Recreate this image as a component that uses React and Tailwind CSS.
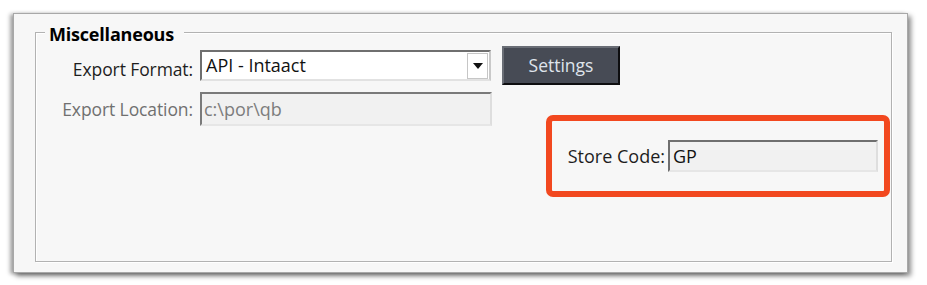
import React from 'react';

const font = { fontFamily: '"Open Sans", "Noto Sans", sans-serif' };

const App = () => {
  return (
    <div className="min-h-screen bg-white pt-[13px] pl-[13px]" style={font}>
      {/* Window panel */}
      <div className="w-[895px] h-[260px] bg-[#f7f7f7] border border-[#a8a8a8] shadow-[3px_3px_5px_rgba(0,0,0,0.45),-3px_1px_4px_rgba(0,0,0,0.35)] pt-[18px] pl-[21px]">
        {/* Miscellaneous group box */}
        <div className="relative w-[857px] h-[230px] border border-[#b2b2b2] shadow-[inset_1px_1px_0_#ffffff,1px_1px_0_#ffffff]">
          <span className="absolute left-[9px] -top-[10px] bg-[#f7f7f7] pl-[4px] pr-[10px] text-[18px] leading-[22px] font-bold tracking-[-0.2px] text-black">
            Miscellaneous
          </span>

          {/* Export Format */}
          <div className="flex items-center mt-[13px] h-[39px]">
            <label className="w-[157px] pt-[7px] text-right text-[17.5px] text-[#1e1e1e] tracking-[-0.1px] whitespace-nowrap">Export Format:</label>
            <div className="ml-[7px] w-[291px] h-[31px] flex items-center bg-white border-2 border-t-[#6f6f6f] border-l-[#6f6f6f] border-r-[#c9c9c9] border-b-[#e2e2e2]">
              <span className="flex-1 pl-[4px] text-[18px] text-[#111]">API - Intaact</span>
              <div className="w-[21px] h-[26px] mr-[1px] flex items-center justify-center bg-white border border-[#c6c6c6]">
                <svg width="10" height="6" viewBox="0 0 10 6">
                  <path d="M0 0 H10 L5 6 Z" fill="#111" />
                </svg>
              </div>
            </div>
            <button className="ml-[11px] w-[118px] h-[39px] bg-[#474b55] border-2 border-t-[#6a6e76] border-l-[#6a6e76] border-r-[#0e0e10] border-b-[#0e0e10] text-[#dfe4ec] text-[17.5px]">
              Settings
            </button>
          </div>

          {/* Export Location */}
          <div className="flex items-center mt-[7px] h-[34px]">
            <label className="w-[157px] text-right text-[17.5px] text-[#707070] tracking-[-0.1px] whitespace-nowrap">Export Location:</label>
            <div className="ml-[7px] w-[292px] h-[34px] flex items-center bg-[#f1f1f1] border-2 border-t-[#7a7a7a] border-l-[#7a7a7a] border-r-[#dedede] border-b-[#e6e6e6]">
              <span className="pl-[2px] text-[18px] text-[#7d7d7d]">c:\por\qb</span>
            </div>
          </div>

          {/* Store Code (highlighted) */}
          <div className="ml-[510px] -mt-[11px] w-[344px] h-[82px] border-[6px] border-[#f2481f] rounded-[7px] flex items-center pl-[15px]">
            <label className="w-[98px] text-right text-[18px] text-[#1e1e1e] whitespace-nowrap">Store Code:</label>
            <div className="ml-[3px] w-[210px] h-[32px] flex items-center bg-[#f1f1f1] border-2 border-t-[#6f6f6f] border-l-[#6f6f6f] border-r-[#dedede] border-b-[#e6e6e6]">
              <span className="pl-[3px] text-[18px] text-[#111]">GP</span>
            </div>
          </div>
        </div>
      </div>
    </div>
  );
};

export default App;
